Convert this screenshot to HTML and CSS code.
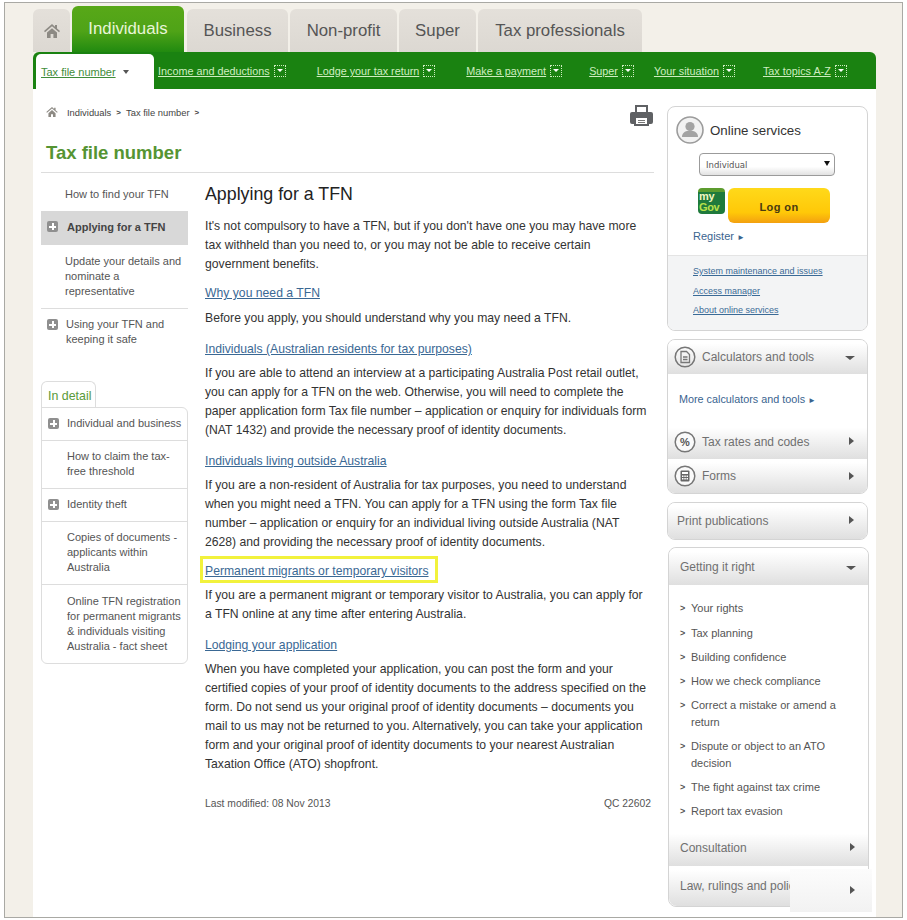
FILE: index.html
```html
<!DOCTYPE html>
<html lang="en">
<head>
<meta charset="utf-8">
<title>Tax file number</title>
<link rel="stylesheet" href="styles.css">
</head>
<body>
<div class="frame">
  <div class="site">
    <div class="tabs">
      <a class="tab tab-home"><svg width="16" height="14" viewBox="0 0 16 14"><path fill="#8d8a84" d="M8 0 0 7l1 1.2L8 2.2l7 6L16 7l-3-2.6V1h-2v1.7L8 0zM3 8.6V14h3.6v-4h2.8v4H13V8.6L8 4.3 3 8.6z"/></svg></a>
      <a class="tab tab-active">Individuals</a>
      <a class="tab tab-business">Business</a>
      <a class="tab tab-nonprofit">Non-profit</a>
      <a class="tab tab-super">Super</a>
      <a class="tab tab-pro">Tax professionals</a>
    </div>
    <nav class="nav">
      <a class="nav-current"><span class="nav-current-label">Tax file number</span><span class="nav-current-arrow"></span></a>
      <a class="nav-item nav-income"><u>Income and deductions</u><i class="drop"></i></a>
      <a class="nav-item nav-lodge"><u>Lodge your tax return</u><i class="drop"></i></a>
      <a class="nav-item nav-pay"><u>Make a payment</u><i class="drop"></i></a>
      <a class="nav-item nav-super"><u>Super</u><i class="drop"></i></a>
      <a class="nav-item nav-sit"><u>Your situation</u><i class="drop"></i></a>
      <a class="nav-item nav-topics"><u>Tax topics A-Z</u><i class="drop"></i></a>
    </nav>
    <div class="page">
      <div class="content">
        <div class="crumb-row">
          <div class="crumbs">
            <svg width="12" height="10" viewBox="0 0 16 14"><path fill="#8d8a84" d="M8 0 0 7l1 1.2L8 2.2l7 6L16 7l-3-2.6V1h-2v1.7L8 0zM3 8.6V14h3.6v-4h2.8v4H13V8.6L8 4.3 3 8.6z"/></svg>
            <span class="crumb crumb-first">Individuals</span><b class="sep">&gt;</b><span class="crumb">Tax file number</span><b class="sep">&gt;</b>
          </div>
          <svg class="printer" width="23" height="21" viewBox="0 0 23 21"><path fill="#5f6164" d="M5 0h13v8H5z"/><path fill="#fff" d="M7 2h9v5H7z"/><path fill="#5f6164" d="M2 7h19a2 2 0 0 1 2 2v8a2 2 0 0 1-2 2h-2v2H4v-2H2a2 2 0 0 1-2-2V9a2 2 0 0 1 2-2z"/><path fill="#fff" d="M6 13h11v6H6z"/><path fill="#777" d="M8 15h7v1H8zM8 17h7v1H8z"/></svg>
        </div>
        <h1 class="title">Tax file number</h1>
        <div class="columns">
          <aside class="side">
            <ul class="sidenav">
              <li class="sn sn-first"><a>How to find your TFN</a></li>
              <li class="sn sn-sel"><i class="plus"></i><a>Applying for a TFN</a></li>
              <li class="sn sn-update"><a>Update your details and nominate a representative</a></li>
              <li class="sn sn-using"><i class="plus"></i><a>Using your TFN and keeping it safe</a></li>
            </ul>
            <div class="detail-tab">In detail</div>
            <ul class="detail">
              <li class="dt"><i class="plus"></i><a>Individual and business</a></li>
              <li class="dt"><a>How to claim the tax-free threshold</a></li>
              <li class="dt"><i class="plus"></i><a>Identity theft</a></li>
              <li class="dt"><a>Copies of documents - applicants within Australia</a></li>
              <li class="dt"><a>Online TFN registration for permanent migrants &amp; individuals visiting Australia - fact sheet</a></li>
            </ul>
          </aside>
          <main class="article">
            <h2 class="heading">Applying for a TFN</h2>
            <p class="para p1">It's not compulsory to have a TFN, but if you don't have one you may have more tax withheld than you need to, or you may not be able to receive certain government benefits.</p>
            <a class="sub s1">Why you need a TFN</a>
            <p class="para p2">Before you apply, you should understand why you may need a TFN.</p>
            <a class="sub s2">Individuals (Australian residents for tax purposes)</a>
            <p class="para p3">If you are able to attend an interview at a participating Australia Post retail outlet, you can apply for a TFN on the web. Otherwise, you will need to complete the paper application form Tax file number – application or enquiry for individuals form (NAT 1432) and provide the necessary proof of identity documents.</p>
            <a class="sub s3">Individuals living outside Australia</a>
            <p class="para p4">If you are a non-resident of Australia for tax purposes, you need to understand when you might need a TFN. You can apply for a TFN using the form Tax file number – application or enquiry for an individual living outside Australia (NAT 2628) and providing the necessary proof of identity documents.</p>
            <div class="hl"><a class="sub">Permanent migrants or temporary visitors</a></div>
            <p class="para p5">If you are a permanent migrant or temporary visitor to Australia, you can apply for a TFN online at any time after entering Australia.</p>
            <a class="sub s6">Lodging your application</a>
            <p class="para p6">When you have completed your application, you can post the form and your certified copies of your proof of identity documents to the address specified on the form. Do not send us your original proof of identity documents – documents you mail to us may not be returned to you. Alternatively, you can take your application form and your original proof of identity documents to your nearest Australian Taxation Office (ATO) shopfront.</p>
            <div class="meta"><span>Last modified: 08 Nov 2013</span><span>QC 22602</span></div>
          </main>
        </div>
      </div>
      <aside class="right">
        <section class="online">
          <div class="online-top">
            <div class="online-head">
              <svg width="28" height="28" viewBox="0 0 28 28"><circle cx="14" cy="14" r="13" fill="#f2f2f2" stroke="#9c9c9c" stroke-width="1.6"/><circle cx="14" cy="10.5" r="4.6" fill="#a3a3a3"/><path fill="#a3a3a3" d="M6 21c0-4 3-5.500 5-6h6c2 .5 5 2 5 6z"/></svg>
              <span class="online-title">Online services</span>
            </div>
            <div class="select"><span>Individual</span><b class="select-arrow"></b></div>
            <div class="logon-row">
              <div class="mygov"><span>my</span><span class="gov">Gov</span></div>
              <a class="logon">Log on</a>
            </div>
            <a class="register">Register <small>►</small></a>
          </div>
          <div class="online-links">
            <a>System maintenance and issues</a>
            <a>Access manager</a>
            <a>About online services</a>
          </div>
        </section>
        <section class="acc acc-calc">
          <div class="acc-head acc-h1">
            <svg class="ico" width="22" height="22" viewBox="0 0 22 22"><circle cx="11" cy="11" r="9.800" fill="none" stroke="#777" stroke-width="1.500"/><path fill="none" stroke="#777" stroke-width="1.300" d="M7 5.500h5.500L15.500 8.500v8H7zM9 11h4.500M9 13.500h4.500"/></svg>
            <span>Calculators and tools</span><i class="arr-down"></i>
          </div>
          <div class="acc-body"><a class="more">More calculators and tools <small>►</small></a></div>
          <div class="acc-head">
            <svg class="ico" width="22" height="22" viewBox="0 0 22 22"><circle cx="11" cy="11" r="9.800" fill="#fafafa" stroke="#777" stroke-width="1.500"/><text x="11" y="15" text-anchor="middle" class="pct">%</text></svg>
            <span>Tax rates and codes</span><i class="arr-right"></i>
          </div>
          <div class="acc-head acc-forms">
            <svg class="ico" width="22" height="22" viewBox="0 0 22 22"><circle cx="11" cy="11" r="9.800" fill="#fafafa" stroke="#777" stroke-width="1.500"/><rect x="6.500" y="5.500" width="9" height="11" rx="1" fill="#666"/><path fill="#fff" d="M8 7h6v2H8zM8 10.500h1.500V12H8zM10.300 10.500h1.500V12h-1.500zM12.500 10.500H14V12h-1.500zM8 13h1.500v1.500H8zM10.300 13h1.500v1.500h-1.500zM12.500 13H14v1.500h-1.500z"/></svg>
            <span>Forms</span><i class="arr-right"></i>
          </div>
        </section>
        <section class="acc acc-print">
          <div class="acc-head acc-plain"><span>Print publications</span><i class="arr-right"></i></div>
        </section>
        <section class="acc acc-right">
          <div class="acc-head acc-plain acc-git"><span>Getting it right</span><i class="arr-down"></i></div>
          <ul class="git-list">
            <li>Your rights</li>
            <li>Tax planning</li>
            <li>Building confidence</li>
            <li>How we check compliance</li>
            <li>Correct a mistake or amend a return</li>
            <li>Dispute or object to an ATO decision</li>
            <li>The fight against tax crime</li>
            <li>Report tax evasion</li>
          </ul>
          <div class="acc-head acc-plain acc-cons"><span>Consultation</span><i class="arr-right"></i></div>
          <div class="acc-head acc-plain acc-law"><span>Law, rulings and policy</span><i class="patch"></i><i class="arr-right"></i></div>
        </section>
      </aside>
    </div>
  </div>
</div>
</body>
</html>
```

FILE: styles.css
```css
* { box-sizing: border-box; }
html, body { margin: 0; padding: 0; background: #fff; }
body { font-family: "Liberation Sans", Arial, sans-serif; color: #333; width: 907px; height: 920px; overflow: hidden; }
a { color: inherit; text-decoration: none; }
ul { list-style: none; margin: 0; padding: 0; }
.frame { margin: 2px 4px 0; height: 916px; border: 1px solid #a9a9a4; background: #f3f0e9; overflow: hidden; padding-left: 28px; }
.site { width: 843px; }

.tabs { display: flex; align-items: flex-end; height: 49px; }
.tab { display: flex; align-items: center; justify-content: center; height: 43px; margin-right: 2px; border-radius: 6px 6px 0 0; background: linear-gradient(#e4e0da, #dcd8d2); color: #555; font-size: 16.800px; }
.tab-home { width: 37px; }
.tab-active { width: 112px; height: 46px; background: linear-gradient(#58a818 0, #4fa317 55%, #218a10 100%); color: #e8f5d8; margin-right: 3px; }
.tab-business { width: 101px; }
.tab-nonprofit { width: 107px; }
.tab-super { width: 77px; }
.tab-pro { width: 164px; }

.nav { display: flex; height: 37px; background: #1a8211; border-radius: 6px 6px 0 0; color: #cfeec0; font-size: 10.800px; }
.nav-current { display: flex; align-items: center; width: 118px; margin: 2px 0 0 3px; padding: 0 0 0 5px; background: #fff; border-radius: 5px 5px 0 0; color: #3f8c3a; font-size: 11px; }
.nav-current-label { text-decoration: underline; }
.nav-current-arrow { margin-left: 7px; border: 3px solid transparent; border-top: 4px solid #555; border-bottom: 0; }
.nav-item { display: flex; align-items: center; white-space: nowrap; padding-top: 1px; }
.nav-income { margin-left: 4px; }
.nav-lodge { margin-left: 31px; }
.nav-pay { margin-left: 31px; }
.nav-super { margin-left: 27px; }
.nav-sit { margin-left: 20px; }
.nav-topics { margin-left: 28px; }
.drop { position: relative; width: 12px; height: 12px; margin-left: 4px; border: 1px dotted #cfeec0; }
.drop::after { content: ""; position: absolute; left: 2px; top: 3px; border: 3px solid transparent; border-top: 3px solid #fff; border-bottom: 0; }

.page { display: flex; width: 843px; height: 830px; background: #fff; padding-left: 8px; }
.content { width: 613px; }
.crumb-row { display: flex; justify-content: space-between; height: 36px; padding-top: 14px; padding-right: 1px; }
.crumbs { display: flex; align-items: center; height: 18px; padding-left: 5px; font-size: 9.400px; color: #444; }
.crumb-first { margin-left: 9px; }
.sep { margin: 0 5px; font-size: 8px; }
.printer { margin-top: 2px; }
.title { margin: 0; height: 48px; padding: 16px 0 0 5px; border-bottom: 1px solid #ddd; font-size: 18.500px; line-height: 24px; color: #559433; font-weight: bold; }

.columns { display: flex; }
.side { width: 147px; font-size: 11px; line-height: 15px; color: #555; }
.sn { position: relative; padding-left: 24px; }
.sn-first { height: 38px; padding-top: 14px; }
.sn-sel { height: 34px; padding: 9px 0 0 26px; background: #d8d8d8; font-weight: bold; color: #444; }
.sn-update { height: 64px; padding-top: 9px; border-bottom: 1px solid #ddd; }
.sn-using { height: 72px; padding-top: 8px; padding-left: 25px; }
.plus { position: absolute; left: 6px; top: 10px; width: 11px; height: 11px; border-radius: 2px; background: #8f8f8f; }
.plus::before { content: ""; position: absolute; left: 2px; top: 4.500px; width: 7px; height: 2px; background: #fff; }
.plus::after { content: ""; position: absolute; left: 4.500px; top: 2px; width: 2px; height: 7px; background: #fff; }
.detail-tab { width: 55px; height: 27px; padding: 7px 0 0 6px; border: 1px solid #ddd; border-bottom: 0; border-radius: 6px 6px 0 0; color: #5a9a3a; font-size: 12.400px; }
.detail { margin-top: -1px; border: 1px solid #ddd; border-radius: 0 6px 6px 6px; }
.dt { position: relative; padding: 8px 4px 9px 25px; border-bottom: 1px solid #ddd; }
.dt:last-child { border-bottom: 0; padding-top: 9px; }
.dt .plus { left: 6px; top: 10px; }

.article { width: 446px; margin-left: 17px; font-size: 12.200px; line-height: 19px; color: #333; }
.heading { margin: 11px 0 0; height: 20px; font-size: 17.800px; line-height: 20px; font-weight: normal; color: #222; }
.para { margin: 0; }
.sub { display: block; width: max-content; color: #3a6894; text-decoration: underline; }
.p1 { margin-top: 13px; }
.s1 { margin-top: 10px; }
.p2 { margin-top: 6px; }
.s2 { margin-top: 12px; }
.p3 { margin-top: 5px; }
.s3 { margin-top: 12px; }
.p4 { margin-top: 5px; }
.hl { width: 238px; height: 27px; margin: 4px 0 0 -5px; padding: 3px 0 0 2px; border: 3px solid #f2f23c; }
.p5 { margin-top: 3px; }
.s6 { margin-top: 12px; }
.p6 { margin-top: 5px; }
.meta { display: flex; justify-content: space-between; margin-top: 20px; font-size: 10.300px; color: #555; }

.right { width: 201px; margin-left: 13px; padding-top: 17px; font-size: 12px; color: #666; }
.online { height: 225px; width: 201px; border: 1px solid #d4d4d4; border-radius: 8px; overflow: hidden; }
.online-top { height: 148px; padding: 9px 0 0 8px; }
.online-head { display: flex; align-items: center; gap: 6px; }
.online-title { font-size: 13.300px; color: #333; }
.select { position: relative; width: 136px; height: 23px; margin: 9px 0 0 23px; padding: 6px 0 0 6px; border: 1px solid #9b9b9b; border-radius: 4px; background: linear-gradient(#fff 60%, #e2e2e2); font-family: "DejaVu Sans", sans-serif; font-size: 8.500px; line-height: 10px; color: #555; }
.select-arrow { position: absolute; right: 4px; top: 7px; border: 3px solid transparent; border-top: 5px solid #111; border-bottom: 0; }
.logon-row { display: flex; margin: 12px 0 0 22px; }
.mygov { display: flex; flex-direction: column; justify-content: center; width: 27px; height: 26px; padding-left: 1px; padding-top: 2px; border-radius: 4px; background: linear-gradient(#5c9c2e 0, #5c9c2e 15%, #1f7a3c 16%); color: #f2f7c0; font-size: 11px; line-height: 11px; font-weight: bold; letter-spacing: -.4px; }
.gov { color: #b8e04a; }
.logon { display: flex; align-items: center; justify-content: center; width: 102px; height: 35px; margin-left: 3px; padding-top: 2px; border-radius: 6px; background: linear-gradient(#ffd91a, #ffc808 70%, #f3a010); color: #4a3a10; font-size: 11px; font-weight: bold; letter-spacing: .4px; }
.register { display: block; margin: 7px 0 0 17px; color: #3a648f; font-size: 11px; }
.register small, .more small { font-size: 8px; }
.online-links { height: 76px; padding: 9px 0 0 25px; background: #f3f4f5; border-top: 1px solid #e4e4e4; font-size: 9px; line-height: 12px; color: #3a6a96; }
.online-links a { display: block; width: max-content; margin-bottom: 7.500px; text-decoration: underline; }

.acc { position: relative; width: 201px; margin-top: 8px; border: 1px solid #d4d4d4; border-radius: 8px; overflow: hidden; }
.acc-head { position: relative; display: flex; align-items: center; height: 35px; padding-left: 6px; background: linear-gradient(#fff 10%, #dfdfdf); color: #707070; font-size: 12px; }
.acc-h1, .acc-forms { height: 34px; }
.ico { margin-right: 6px; flex: none; }
.pct { font: bold 11px "Liberation Sans", sans-serif; fill: #555; }
.arr-down { position: absolute; right: 12px; top: 16px; border: 5px solid transparent; border-top: 4px solid #555; border-bottom: 0; }
.arr-right { position: absolute; right: 13px; top: 13px; border: 4px solid transparent; border-left: 5px solid #555; border-right: 0; }
.acc-body { height: 50px; padding: 17px 0 0 11px; background: #fff; }
.more { color: #3a648f; font-size: 10.800px; line-height: 16px; }
.acc-plain { padding-left: 9px; }
.acc-print { height: 38px; }
.acc-print .acc-head { height: 36px; }
.acc-right { left: 1px; height: 360px; margin-top: 7px; border-radius: 8px 8px 0 8px; overflow: visible; }
.acc-right .acc-plain { padding-left: 11px; }
.acc-git { height: 37px; border-radius: 8px 8px 0 0; }
.acc-git .arr-down { top: 18px; }
.git-list { height: 245px; padding: 15px 0 0 11px; font-size: 11px; line-height: 17px; color: #555; }
.git-list li { position: relative; padding-left: 11px; margin-bottom: 7px; padding-right: 25px; }
.git-list li:first-child { margin-bottom: 8px; }
.git-list li::before { content: ">"; position: absolute; left: 0; top: 0; font-size: 9px; font-weight: bold; }
.acc-cons { height: 36px; }
.acc-law { height: 40px; border-radius: 0 0 0 8px; }
.patch { position: absolute; left: 121px; top: 3px; right: -4px; bottom: -6px; background: linear-gradient(#fcfcfc, #f2f2f2); }
.acc-law .arr-right { top: 20px; }
```
